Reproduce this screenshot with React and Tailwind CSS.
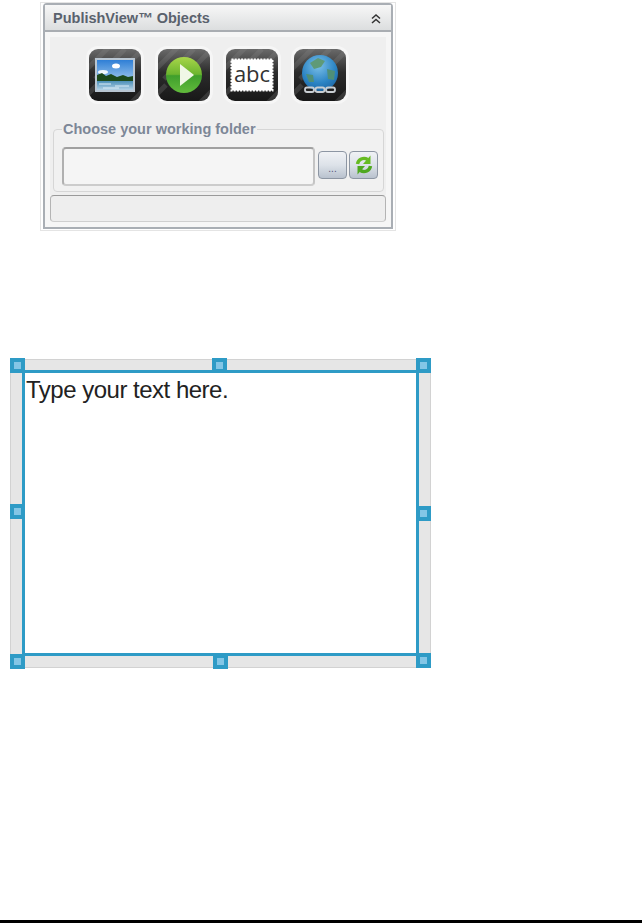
function Tile({ id, children }) {
  return (
    <div className="w-[52px] h-[52px] rounded-[9px] shadow-[0_0_0_3px_#f6f6f6]">
      <svg width="52" height="52" viewBox="0 0 52 52" className="block">
        <defs>
          <linearGradient id={`tile-${id}`} x1="0" y1="0" x2="0" y2="1">
            <stop offset="0" stopColor="#6a6a6a" />
            <stop offset="0.45" stopColor="#2c2c2c" />
            <stop offset="1" stopColor="#181818" />
          </linearGradient>
          <clipPath id={`clip-${id}`}>
            <rect width="52" height="52" rx="9" />
          </clipPath>
        </defs>
        <rect width="52" height="52" rx="9" fill={`url(#tile-${id})`} />
        <g clipPath={`url(#clip-${id})`} stroke="#8a8a8a" strokeOpacity="0.25" strokeWidth="5">
          <path d="M-4 22 L22 -4" />
          <path d="M6 30 L36 0" />
          <path d="M20 34 L56 -2" />
          <path d="M-6 50 L8 36" />
          <path d="M36 60 L60 36" />
        </g>
        {children}
      </svg>
    </div>
  );
}

function PictureIcon() {
  return (
    <Tile id="pic">
      <defs>
        <linearGradient id="sky" x1="0" y1="0" x2="0" y2="1">
          <stop offset="0" stopColor="#2f7fd6" />
          <stop offset="1" stopColor="#cfe6f7" />
        </linearGradient>
        <linearGradient id="lake" x1="0" y1="0" x2="0" y2="1">
          <stop offset="0" stopColor="#4b8fb8" />
          <stop offset="1" stopColor="#b3d2e6" />
        </linearGradient>
      </defs>
      <rect x="6" y="9" width="40" height="34" fill="#b9c6d2" />
      <rect x="8" y="11" width="36" height="30" fill="url(#sky)" />
      <ellipse cx="27" cy="17" rx="4" ry="2.5" fill="#ffffff" />
      <ellipse cx="14" cy="23" rx="5" ry="2" fill="#f2f8fc" />
      <path d="M8 26 L13 24 L17 27 L22 25 L28 28 L34 26 L39 28 L44 27 V33 H8 Z" fill="#1d4a1c" />
      <rect x="8" y="32" width="36" height="9" fill="url(#lake)" />
      <path d="M10 35 H22 M26 37 H40 M14 39 H30" stroke="#dcecf6" strokeWidth="1" />
    </Tile>
  );
}

function PlayIcon() {
  return (
    <Tile id="play">
      <defs>
        <linearGradient id="playGreen" x1="0" y1="0" x2="0" y2="1">
          <stop offset="0" stopColor="#a9d64a" />
          <stop offset="0.48" stopColor="#6cb52f" />
          <stop offset="0.52" stopColor="#3f9f2c" />
          <stop offset="1" stopColor="#62bb3c" />
        </linearGradient>
      </defs>
      <circle cx="26" cy="26" r="18" fill="url(#playGreen)" />
      <path d="M22 15 L36 26 L22 37 Z" fill="#f0f7e6" />
    </Tile>
  );
}

function TextIcon() {
  return (
    <Tile id="abc">
      <rect
        x="5.5"
        y="10.5"
        width="41"
        height="31"
        fill="#ffffff"
        stroke="#ffffff"
        strokeWidth="2"
        strokeDasharray="2 1.2"
      />
      <text
        x="26"
        y="33"
        textAnchor="middle"
        className="font-['Open_Sans',sans-serif] text-[22px]"
        fill="#333333"
      >
        abc
      </text>
    </Tile>
  );
}

function GlobeIcon() {
  return (
    <Tile id="globe">
      <defs>
        <radialGradient id="sea" cx="0.45" cy="0.3" r="0.8">
          <stop offset="0" stopColor="#7cc0e8" />
          <stop offset="0.6" stopColor="#2b84c4" />
          <stop offset="1" stopColor="#1a5f9c" />
        </radialGradient>
      </defs>
      <circle cx="26" cy="24" r="18" fill="url(#sea)" />
      <path d="M16 14 L24 9 L31 12 L27 18 L20 20 Z" fill="#5f9a78" />
      <path d="M33 20 L41 22 L40 31 L34 30 Z" fill="#4f8f78" />
      <path d="M12 25 L19 26 L20 33 L15 33 Z" fill="#4f8f78" />
      <g fill="none" stroke="#c9ced2" strokeWidth="1.8">
        <rect x="11" y="38.5" width="9" height="4.5" rx="2" />
        <rect x="21.5" y="38.5" width="9" height="4.5" rx="2" />
        <rect x="32" y="38.5" width="9" height="4.5" rx="2" />
      </g>
    </Tile>
  );
}

function Handle({ className }) {
  return (
    <div className={`absolute w-[15px] h-[15px] bg-[#2e9bc6] flex items-center justify-center ${className}`}>
      <div className="w-[7px] h-[7px] bg-[#83c6e6]" />
    </div>
  );
}

export default function App() {
  return (
    <div className="h-[923px] bg-white flex flex-col font-['Liberation_Sans',Arial,sans-serif]">
      {/* PublishView panel */}
      <div className="ml-[40px] mt-[2px] w-[356px] h-[229px] border border-[#e4e4e4] px-[2px] pb-[1px]">
        <div className="h-full flex flex-col border-2 border-[#a9aeb4] rounded-t-[4px] bg-[#f6f6f6]">
          <div className="h-[27px] shrink-0 flex items-center justify-between pl-[8px] pr-[10px] pt-[2px] border-b-2 border-[#a9adb2] bg-gradient-to-b from-[#f7f7f7] to-[#dcdedf]">
            <span className="text-[14.5px] font-bold text-[#5a626d] leading-none">PublishView™ Objects</span>
            <svg width="10" height="10" viewBox="0 0 10 10" fill="none" stroke="#333333" strokeWidth="1.5">
              <path d="M1 4.5 L5 1 L9 4.5" />
              <path d="M1 9 L5 5.5 L9 9" />
            </svg>
          </div>

          <div className="mx-[5px] mt-[5px] h-[158px] shrink-0 bg-[#efefef] px-[3px] flex flex-col">
            <div className="ml-[36px] mt-[12px] flex gap-[16px]">
              <PictureIcon />
              <div className="ml-px">
                <PlayIcon />
              </div>
              <TextIcon />
              <GlobeIcon />
            </div>

            <fieldset className="mt-[20px] h-[71px] border border-[#d6d6d6] rounded-[4px] pl-[8px] pr-[5px] bg-[#f1f1f1]">
              <legend className="px-[1px] text-[14.5px] leading-[16px] font-bold text-[#7d8797]">
                Choose your working folder
              </legend>
              <div className="flex items-center mt-[10px]">
                <div className="w-[253px] h-[39px] rounded-[4px] border-2 border-t-[#a0a0a0] border-l-[#b0b0b0] border-r-[#c4c4c4] border-b-[#cccccc] bg-[#f5f5f5]" />
                <button className="ml-[3px] -mt-[3px] w-[29px] h-[28px] rounded-[4px] border border-[#8d96a3] bg-gradient-to-b from-[#f0f2f5] via-[#dde2e9] to-[#b9c2ce] flex items-end justify-center pb-[4px] text-[10px] leading-[10px] text-[#555577]">
                  ...
                </button>
                <button className="ml-[2px] -mt-[3px] w-[29px] h-[28px] rounded-[4px] border border-[#8d96a3] bg-gradient-to-b from-[#f0f2f5] via-[#dde2e9] to-[#b9c2ce] flex items-center justify-center">
                  <svg width="22" height="22" viewBox="0 0 22 22">
                    <path d="M4.5 10 A6.5 6.5 0 0 1 14.5 5.5" fill="none" stroke="#66bb22" strokeWidth="3.4" />
                    <path d="M17.5 1.5 V10 H10 Z" fill="#66bb22" />
                    <path d="M17.5 12 A6.5 6.5 0 0 1 7.5 16.5" fill="none" stroke="#4fa81f" strokeWidth="3.4" />
                    <path d="M4.5 20.5 V12 H12 Z" fill="#4fa81f" />
                  </svg>
                </button>
              </div>
            </fieldset>
          </div>

          <div className="mx-[5px] h-[27px] shrink-0 rounded-[4px] border border-t-[#9a9a9a] border-x-[#b4b4b4] border-b-[#cfcfcf] bg-[#eeeeee]" />
        </div>
      </div>

      {/* Text box with selection handles */}
      <div className="relative ml-[10px] mt-[128px] w-[421px] h-[309px] bg-[#e6e6e6] border border-[#d2d2d2] px-[11px] pt-[10px] pb-[11px]">
        <div className="h-full border-[3px] border-[#2e9bc6] bg-white pl-[1px] pt-[3px] text-[24px] leading-[28px] tracking-[-0.5px] text-[#222222]">
          Type your text here.
        </div>
        <Handle className="-left-px -top-[2px]" />
        <Handle className="left-[201px] -top-[2px]" />
        <Handle className="right-[-1px] -top-[2px]" />
        <Handle className="-left-px top-[144px]" />
        <Handle className="right-[-1px] top-[146px]" />
        <Handle className="-left-px bottom-[-2px]" />
        <Handle className="left-[202px] bottom-[-2px]" />
        <Handle className="right-[-1px] bottom-[-1px]" />
      </div>

      <div className="mt-auto h-[3px] bg-black" />
    </div>
  );
}
